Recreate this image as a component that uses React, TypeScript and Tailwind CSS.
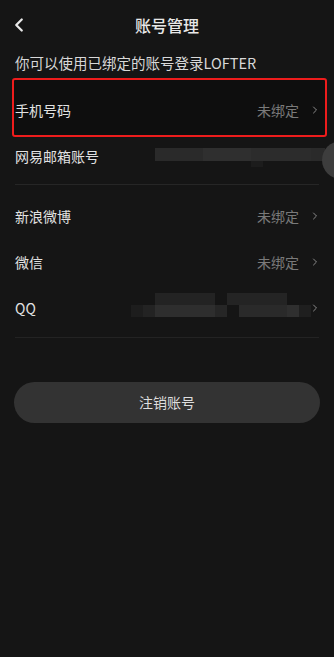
import { ChevronLeft, ChevronRight } from 'lucide-react';

const font = { fontFamily: '"Noto Sans CJK SC", "Noto Sans", sans-serif' };

type Row = { label: string; value?: string; blur?: 'mail' | 'qq' };

const Blur = ({ kind }: { kind: 'mail' | 'qq' }) => {
  if (kind === 'mail') {
    return (
      <div className="absolute left-[155px] top-[15px] flex">
        <div className="h-[13px] w-[48px] bg-[#2a2a2a]" />
        <div className="h-[13px] w-[48px] bg-[#2f2f2f]" />
        <div className="flex flex-col">
          <div className="h-[13px] w-[60px] bg-[#2c2c2c]" />
          <div className="h-[6px] w-[12px] bg-[#1c1c1c]" />
        </div>
        <div className="h-[13px] w-[14px] bg-[#2a2a2a]" />
      </div>
    );
  }
  return (
    <div className="absolute left-[131px] top-[8px] flex flex-col">
      <div className="ml-[24px] flex">
        <div className="h-[12px] w-[60px] bg-[#232323]" />
        <div className="ml-[12px] h-[12px] w-[60px] bg-[#242424]" />
      </div>
      <div className="flex">
        <div className="h-[12px] w-[12px] bg-[#1d1d1d]" />
        <div className="h-[12px] w-[12px] bg-[#232323]" />
        <div className="h-[12px] w-[60px] bg-[#2e2e2e]" />
        <div className="h-[12px] w-[12px] bg-[#262626]" />
        <div className="ml-[12px] h-[12px] w-[48px] bg-[#2a2a2a]" />
        <div className="h-[12px] w-[12px] bg-[#2f2f2f]" />
        <div className="h-[12px] w-[12px] bg-[#1f1f1f]" />
      </div>
    </div>
  );
};

const ListRow = ({ row }: { row: Row }) => (
  <div className="relative flex h-[46px] items-center justify-between pl-[15px] pr-[13px]">
    <span className="text-[14px] text-[#e2e2e2]">{row.label}</span>
    {row.blur && <Blur kind={row.blur} />}
    <div className="relative flex items-center gap-[10px]">
      {row.value && <span className="text-[14px] text-[#7a7a7a]">{row.value}</span>}
      {row.blur !== 'mail' && <ChevronRight size={12} strokeWidth={2} className="text-[#8a8a8a]" />}
    </div>
  </div>
);

export default function App() {
  const top: Row[] = [
    { label: '手机号码', value: '未绑定' },
    { label: '网易邮箱账号', blur: 'mail' },
  ];
  const bottom: Row[] = [
    { label: '新浪微博', value: '未绑定' },
    { label: '微信', value: '未绑定' },
    { label: 'QQ', blur: 'qq' },
  ];

  return (
    <div className="relative h-[657px] w-[334px] overflow-hidden bg-[#151515]" style={font}>
      {/* annotation box, painted under the rows */}
      <div className="absolute left-[12px] top-[78px] h-[59px] w-[315px] rounded-[3px] border-[2.5px] border-[#ee1c1c] bg-[#0e0e0e]" />

      <header className="relative flex h-[50px] items-center justify-center">
        <ChevronLeft size={22} strokeWidth={2.5} className="absolute left-[8px] text-[#e8e8e8]" />
        <h1 className="text-[16px] font-medium text-[#e8e8e8]">账号管理</h1>
      </header>

      <p className="relative px-[15px] text-[14.5px] leading-[26px] text-[#d8d8d8]">你可以使用已绑定的账号登录LOFTER</p>

      <div className="relative mt-[11px]">
        {top.map((r) => (
          <ListRow key={r.label} row={r} />
        ))}
      </div>
      <div className="mx-[15px] mt-[5px] h-px bg-[#262626]" />

      <div className="mt-[8px]">
        {bottom.map((r) => (
          <ListRow key={r.label} row={r} />
        ))}
      </div>
      <div className="mx-[15px] mt-[6px] h-px bg-[#232323]" />

      <div className="mt-[44px] px-[14px]">
        <button className="flex h-[41px] w-full items-center justify-center rounded-full bg-[#333333] text-[14px] text-[#dedede]">
          注销账号
        </button>
      </div>

      {/* floating edge handle */}
      <div className="absolute left-[322px] top-[141px] h-[38px] w-[38px] rounded-full bg-[#3d3d3d]" />
    </div>
  );
}
